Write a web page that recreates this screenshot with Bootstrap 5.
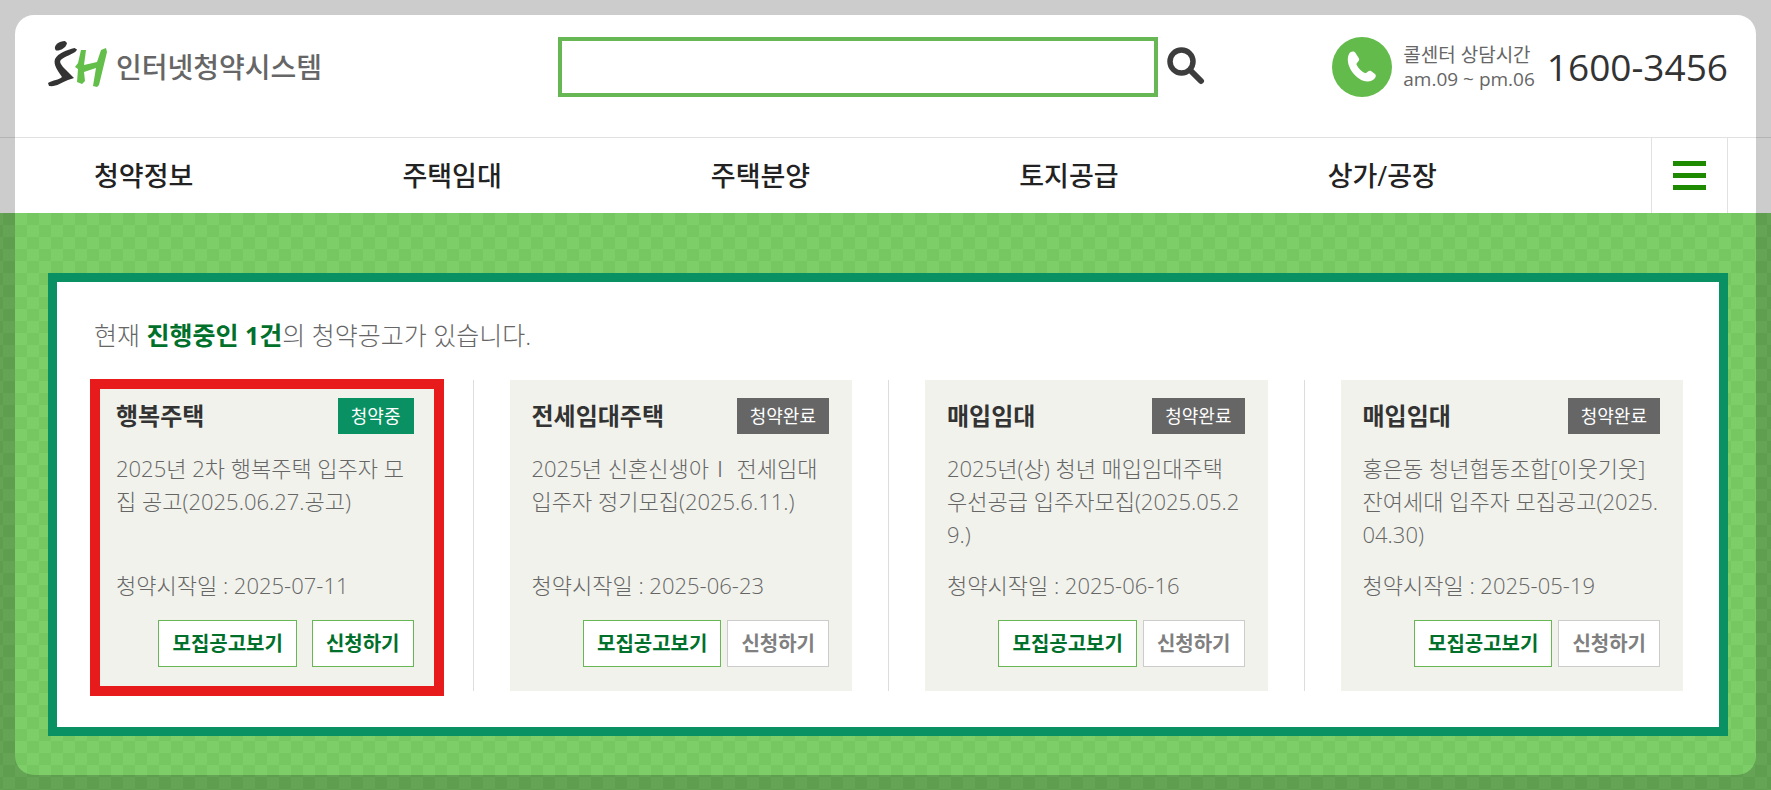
<!DOCTYPE html>
<html lang="ko">
<head>
<meta charset="utf-8">
<meta name="viewport" content="width=device-width, initial-scale=1">
<title>SH 인터넷청약시스템</title>
<link href="https://cdn.jsdelivr.net/npm/bootstrap@5.3.0/dist/css/bootstrap.min.css" rel="stylesheet">
<style>
  body {
    font-family: "Open Sans", "Noto Sans CJK KR", sans-serif;
    color: #666;
    min-height: 100vh;
  }
  a { text-decoration: none; }

  /* dimmed frame round the window */
  .frame-shade {
    inset: 15px;
    border-radius: 19px;
    box-shadow: 0 0 0 40px rgba(0, 0, 0, .2);
    pointer-events: none;
    z-index: 10;
  }

  /* header */
  .site-head {
    display: grid;
    grid-template-columns: 1fr auto 1fr;
    align-items: start;
    padding: 37px 43px 40px 48px;
  }
  .brand { height: 60px; color: #666; font-size: 28px; line-height: 40px; font-weight: 500; }
  .brand svg { margin-bottom: 6px; }
  .search-box {
    width: 600px;
    height: 60px;
    border: 4px solid #67b755;
    border-radius: 0;
  }
  .search-btn { width: 61px; height: 57px; padding: 0 4px 0 0; }
  .call-time { font-size: 19px; line-height: 24px; margin: 0 12px 0 11px; }
  .call-no { font-size: 37px; line-height: 60px; color: #333; }

  /* main menu */
  .site-menu { border-top: 1px solid #e1e1e1; padding: 0 43px 0 94px; }
  .site-menu ul { margin-right: 15px; }
  .site-menu li { flex: 1 1 0; }
  .site-menu li a { font-size: 27px; line-height: 75px; font-weight: 500; color: #222; }
  .menu-btn { width: 77px; border: solid #e1e1e1; border-width: 0 1px; }

  /* notice area */
  .notice-area {
    padding: 60px 43px 53px 48px;
    background: conic-gradient(#7dcd69 25%, #76c662 0 50%, #7dcd69 0 75%, #76c662 0) 3px 0 / 24px 24px;
  }
  .notice-panel { border: 9px solid #0a9163; padding: 37px 36px 36px 37px; }
  .notice-sum { font-size: 25px; line-height: 33px; font-weight: 300; margin-bottom: 28px; }
  .notice-sum strong { color: #00702b; font-weight: 700; }
  .notice-list { gap: 36px; }
  .notice-rule { width: 1px; background: #ddd; }
  .notice-item { flex: 1 1 0; min-width: 0; background: #f1f2ec; padding: 18px 23px 24px 22px; }
  .notice-item h2 { font-size: 24px; line-height: 36px; font-weight: 700; color: #333; }
  .state { font-size: 18px; line-height: 36px; padding: 0 13px; color: #fff; background: #666; }
  .state-open { background: #0a9163; }
  .notice-text { font-size: 22px; line-height: 33px; font-weight: 300; word-break: break-all; }
  .notice-desc { height: 99px; margin: 18px 0; }
  .acts { margin-top: 18px; gap: 6px; }
  .acts-open { gap: 15px; }
  .act { font-size: 20px; line-height: 45px; font-weight: 700; padding: 0 13px; border-radius: 0; background: #fff; border: 1px solid #ccc; color: #808080; }
  .act-on { border-color: #67b755; color: #00702b; }
  .picked::after {
    content: "";
    position: absolute;
    inset: -1px -7px -5px -4px;
    border: 10px solid #e71b1b;
    pointer-events: none;
  }
</style>
</head>
<body class="bg-white d-flex flex-column">

<header>
  <div class="site-head">
    <a href="#" class="brand d-flex align-items-center">
      <svg width="60" height="48" viewBox="0 0 60 48" aria-label="SH" role="img">
        <path d="M7 9C6 5 11 1 17 1L19 3C18 8 12 11 8 10.500Z" fill="#333"/>
        <path d="M26.500 8L29 9.500C28 13 20 15 14 19C11 21 12 23 15 27L26 38L20 40C13 43 8 47 1 46L0 43C5 40 11 40 14 37C10 31 5 25 7 19C10 13 19 10 26.500 8Z" fill="#333"/>
        <path d="M33 10L38 10L36 25L49 22L53 10L58 8L59 12L51 45L49 47L45 46L48 28L36 32L37 41L34 44L29 42L30 29L27 27L30 23Z" fill="#63bf4a"/>
      </svg>
      <span class="ms-2">인터넷청약시스템</span>
    </a>
    <form class="d-flex" role="search">
      <input class="search-box px-3" type="text" aria-label="검색어">
      <button class="btn search-btn border-0" type="button" aria-label="검색">
        <svg width="38" height="38" viewBox="0 0 38 38" fill="none" stroke="#3d3d3d">
          <circle cx="14.500" cy="14.500" r="11.500" stroke-width="5.500"/>
          <path d="M24 24L34 34" stroke-width="6" stroke-linecap="round"/>
        </svg>
      </button>
    </form>
    <div class="d-flex align-items-center justify-content-end text-nowrap">
      <svg width="60" height="60" viewBox="0 0 60 60">
        <circle cx="30" cy="30" r="30" fill="#63bb4c"/>
        <path d="M17 17C19 14 22 14 23.500 16L27 21.500C28 24 24 26 24.500 27.500C26 31 30 35 33 36C35 36.500 36.500 33 39 34L43 37C45 39 43 42 40 43.500C33 47 25 41 21 36C17 31 14 23 17 17Z" fill="#fff"/>
      </svg>
      <div class="call-time">콜센터 상담시간<br>am.09 ~ pm.06</div>
      <div class="call-no">1600-3456</div>
    </div>
  </div>
  <nav class="site-menu d-flex">
    <ul class="d-flex flex-fill list-unstyled mb-0">
      <li><a class="d-block" href="#">청약정보</a></li>
      <li><a class="d-block" href="#">주택임대</a></li>
      <li><a class="d-block" href="#">주택분양</a></li>
      <li><a class="d-block" href="#">토지공급</a></li>
      <li><a class="d-block" href="#">상가/공장</a></li>
    </ul>
    <button class="menu-btn btn rounded-0 p-0" type="button" aria-label="전체메뉴">
      <svg width="33" height="29" viewBox="0 0 33 29" fill="#1e8a00"><path d="M0 0H33V5H0ZM0 12H33V17H0ZM0 24H33V29H0Z"/></svg>
    </button>
  </nav>
</header>

<main class="notice-area flex-fill">
  <section class="notice-panel bg-white">
    <p class="notice-sum">현재 <strong>진행중인 1건</strong>의 청약공고가 있습니다.</p>
    <div class="notice-list d-flex">
      <article class="notice-item picked position-relative">
        <div class="d-flex justify-content-between"><h2 class="m-0">행복주택</h2><span class="state state-open">청약중</span></div>
        <p class="notice-text notice-desc">2025년 2차 행복주택 입주자 모집 공고(2025.06.27.공고)</p>
        <p class="notice-text mb-0">청약시작일 : 2025-07-11</p>
        <div class="acts acts-open d-flex justify-content-end text-nowrap"><button class="btn act act-on" type="button">모집공고보기</button><button class="btn act act-on" type="button">신청하기</button></div>
      </article>
      <div class="notice-rule"></div>
      <article class="notice-item">
        <div class="d-flex justify-content-between"><h2 class="m-0">전세임대주택</h2><span class="state">청약완료</span></div>
        <p class="notice-text notice-desc">2025년 신혼신생아Ⅰ 전세임대 입주자 정기모집(2025.6.11.)</p>
        <p class="notice-text mb-0">청약시작일 : 2025-06-23</p>
        <div class="acts d-flex justify-content-end text-nowrap"><button class="btn act act-on" type="button">모집공고보기</button><button class="btn act" type="button">신청하기</button></div>
      </article>
      <div class="notice-rule"></div>
      <article class="notice-item">
        <div class="d-flex justify-content-between"><h2 class="m-0">매입임대</h2><span class="state">청약완료</span></div>
        <p class="notice-text notice-desc">2025년(상) 청년 매입임대주택 우선공급 입주자모집(2025.05.29.)</p>
        <p class="notice-text mb-0">청약시작일 : 2025-06-16</p>
        <div class="acts d-flex justify-content-end text-nowrap"><button class="btn act act-on" type="button">모집공고보기</button><button class="btn act" type="button">신청하기</button></div>
      </article>
      <div class="notice-rule"></div>
      <article class="notice-item">
        <div class="d-flex justify-content-between"><h2 class="m-0">매입임대</h2><span class="state">청약완료</span></div>
        <p class="notice-text notice-desc">홍은동 청년협동조합[이웃기웃] 잔여세대 입주자 모집공고(2025.04.30)</p>
        <p class="notice-text mb-0">청약시작일 : 2025-05-19</p>
        <div class="acts d-flex justify-content-end text-nowrap"><button class="btn act act-on" type="button">모집공고보기</button><button class="btn act" type="button">신청하기</button></div>
      </article>
    </div>
  </section>
</main>

<div class="frame-shade position-fixed"></div>
<script src="https://cdn.jsdelivr.net/npm/bootstrap@5.3.0/dist/js/bootstrap.bundle.min.js"></script>
</body>
</html>
